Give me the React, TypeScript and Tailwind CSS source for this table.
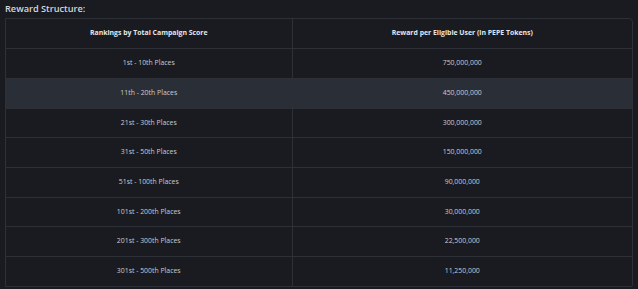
const rows: [string, string][] = [
  ["1st - 10th Places", "750,000,000"],
  ["11th - 20th Places", "450,000,000"],
  ["21st - 30th Places", "300,000,000"],
  ["31st - 50th Places", "150,000,000"],
  ["51st - 100th Places", "90,000,000"],
  ["101st - 200th Places", "30,000,000"],
  ["201st - 300th Places", "22,500,000"],
  ["301st - 500th Places", "11,250,000"],
];

export default function App() {
  return (
    <div className="w-[638px] h-[289px] overflow-hidden bg-[#1a1b20] pl-[5px] pr-[5px] font-['Open_Sans',sans-serif]">
      <div className="h-[18px] pt-[2px] text-[9.2px] leading-[14px] font-semibold text-[#d4d7dd]">
        Reward Structure:
      </div>
      <div className="w-[628px] border border-[#2d3037] rounded-tr-[4px] rounded-br-[2px] overflow-hidden">
        <table className="w-full border-collapse text-[6.9px] text-center">
          <thead>
            <tr className="h-[29.7px]">
              <th className="w-[286px] font-bold text-[#e4e6ea] border-r border-[#2d3037]">
                Rankings by Total Campaign Score
              </th>
              <th className="font-bold text-[#e4e6ea]">Reward per Eligible User (in PEPE Tokens)</th>
            </tr>
          </thead>
          <tbody>
            {rows.map(([place, reward], i) => (
              <tr
                key={place}
                className={`h-[29.7px] border-t border-[#2d3037] ${i === 1 ? "bg-[#2a2f37]" : ""}`}
              >
                <td className="text-[#c9ccd2] border-r border-[#2d3037]">{place}</td>
                <td className="text-[#c9ccd2]">{reward}</td>
              </tr>
            ))}
          </tbody>
        </table>
      </div>
    </div>
  );
}
